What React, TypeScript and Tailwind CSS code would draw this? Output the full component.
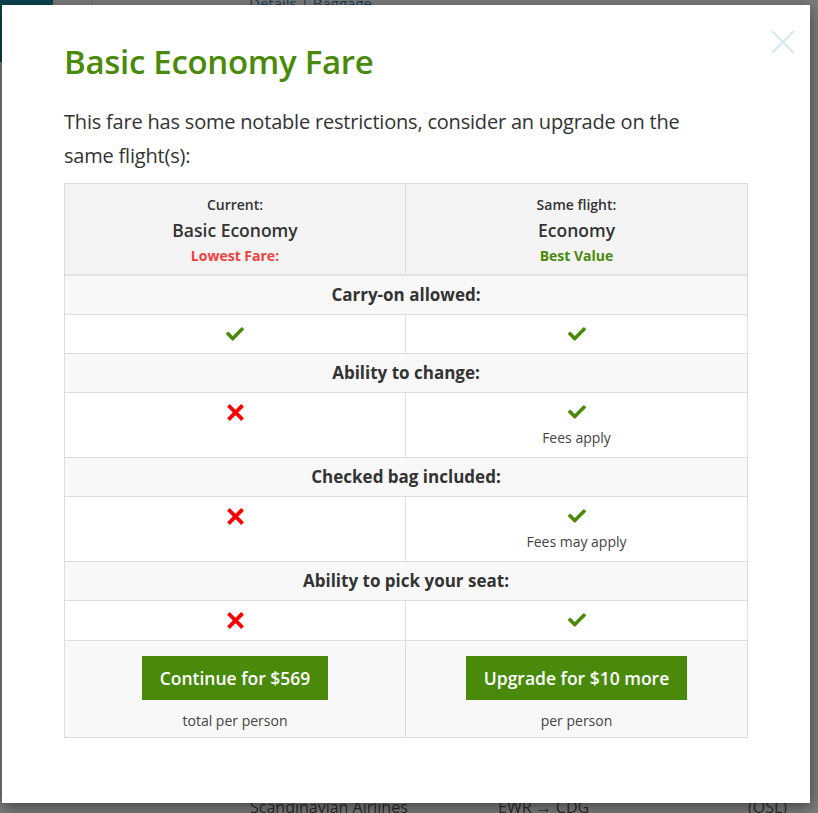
import { FaCheck } from 'react-icons/fa';

const font = { fontFamily: '"Open Sans", "Noto Sans", sans-serif' };

function Yes({ note }: { note?: string }) {
  return (
    <div className="flex flex-col items-center justify-start pt-[10px] pb-[10px] border-r border-[#dddddd] last:border-r-0">
      <FaCheck className="text-[#4a8a0a] w-[18px] h-[18px]" />
      {note && <div className="mt-[8px] text-[14px] leading-[18px] text-[#444]">{note}</div>}
    </div>
  );
}

function No() {
  return (
    <div className="flex flex-col items-center pt-[10px] pb-[10px] border-r border-[#dddddd]">
      <svg viewBox="0 0 20 20" className="w-[19px] h-[19px] text-[#ff0000]" fill="none" stroke="currentColor" strokeWidth="4" strokeLinecap="square">
        <path d="M4 4 L16 16 M16 4 L4 16" />
      </svg>
    </div>
  );
}

function Label({ children }: { children: React.ReactNode }) {
  return (
    <div className="bg-[#f8f8f8] border-b border-[#dddddd] h-[39px] flex items-center justify-center text-[17px] font-bold text-[#333]">
      {children}
    </div>
  );
}

function Row({ children }: { children: React.ReactNode }) {
  return <div className="grid grid-cols-2 border-b border-[#dddddd] bg-white">{children}</div>;
}

export default function App() {
  return (
    <div className="relative w-[818px] h-[813px] overflow-hidden bg-[#7b7b7b]" style={font}>
      {/* page behind the overlay */}
      <div className="flex h-[62px]">
        <div className="w-[53px] bg-[#0b4450]" />
        <div className="w-[40px] border-r border-[#6d6d6d]" />
        <div className="pl-[156px] -mt-[8px] text-[15px] text-[#1d3e57]">Details | Baggage</div>
      </div>
      <div className="absolute left-[250px] top-[795px] flex text-[16px] text-[#2b2b2b]">
        <span className="w-[248px]">Scandinavian Airlines</span>
        <span className="w-[250px]">EWR → CDG</span>
        <span>(OSL)</span>
      </div>

      {/* modal */}
      <div className="absolute left-[2px] top-[5px] w-[808px] h-[798px] bg-white shadow-[0_4px_14px_rgba(0,0,0,0.45)] px-[62px] pt-[33px]">
        <button className="absolute right-[14px] top-[24px] w-[26px] h-[26px] text-[#cfe5f1]">
          <svg viewBox="0 0 24 24" className="w-full h-full" fill="none" stroke="currentColor" strokeWidth="1.6">
            <path d="M2 2 L22 22 M22 2 L2 22" />
          </svg>
        </button>
        <h1 className="text-[33px] leading-[48px] font-semibold text-[#4a8a0a] tracking-[-0.3px]">Basic Economy Fare</h1>
        <p className="mt-[19px] text-[20px] leading-[34px] text-[#333] pr-[30px] tracking-[-0.2px]">
          This fare has some notable restrictions, consider an upgrade on the same flight(s):
        </p>

        <div className="mt-[10px] border border-[#dddddd]">
          <div className="grid grid-cols-2 bg-[#f4f4f4] border-b-2 border-[#e2e2e2]">
            <div className="flex flex-col items-center pt-[11px] pb-[7px] border-r border-[#dddddd]">
              <div className="text-[14px] font-semibold text-[#333] leading-[20px]">Current:</div>
              <div className="text-[17.5px] font-semibold text-[#333] leading-[28px] mt-[1px]">Basic Economy</div>
              <div className="text-[14px] font-bold text-[#f04040] leading-[22px] mt-[1px]">Lowest Fare:</div>
            </div>
            <div className="flex flex-col items-center pt-[11px] pb-[7px]">
              <div className="text-[14px] font-semibold text-[#333] leading-[20px]">Same flight:</div>
              <div className="text-[17.5px] font-semibold text-[#333] leading-[28px] mt-[1px]">Economy</div>
              <div className="text-[14px] font-bold text-[#4a8a0a] leading-[22px] mt-[1px]">Best Value</div>
            </div>
          </div>

          <Label>Carry-on allowed:</Label>
          <Row>
            <Yes />
            <Yes />
          </Row>
          <Label>Ability to change:</Label>
          <Row>
            <No />
            <Yes note="Fees apply" />
          </Row>
          <Label>Checked bag included:</Label>
          <Row>
            <No />
            <Yes note="Fees may apply" />
          </Row>
          <Label>Ability to pick your seat:</Label>
          <Row>
            <No />
            <Yes />
          </Row>

          <div className="grid grid-cols-2 bg-[#f8f8f8]">
            <div className="flex flex-col items-center pt-[15px] pb-[6px] border-r border-[#dddddd]">
              <button className="h-[44px] px-[18px] bg-[#4a8a0a] text-white text-[17.5px] font-semibold">
                Continue for $569
              </button>
              <div className="mt-[11px] text-[14px] leading-[20px] text-[#444]">total per person</div>
            </div>
            <div className="flex flex-col items-center pt-[15px] pb-[6px]">
              <button className="h-[44px] px-[18px] bg-[#4a8a0a] text-white text-[17.5px] font-semibold">
                Upgrade for $10 more
              </button>
              <div className="mt-[11px] text-[14px] leading-[20px] text-[#444]">per person</div>
            </div>
          </div>
        </div>
      </div>
    </div>
  );
}
